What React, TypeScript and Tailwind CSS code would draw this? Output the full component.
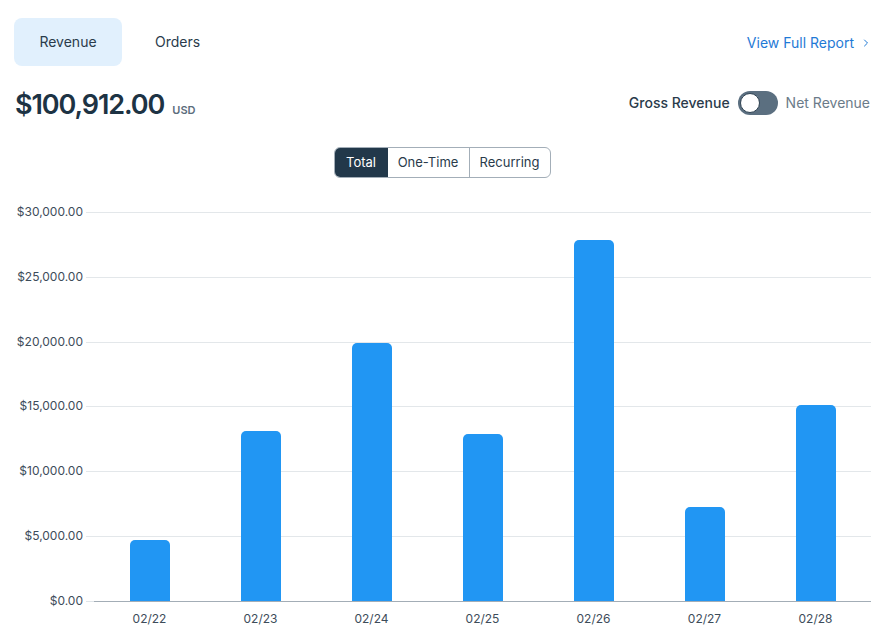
import { ChevronRight } from 'lucide-react'

const ticks = ['$30,000.00', '$25,000.00', '$20,000.00', '$15,000.00', '$10,000.00', '$5,000.00', '$0.00']

const data = [
  { day: '02/22', value: 4707 },
  { day: '02/23', value: 13117 },
  { day: '02/24', value: 19907 },
  { day: '02/25', value: 12886 },
  { day: '02/26', value: 27855 },
  { day: '02/27', value: 7253 },
  { day: '02/28', value: 15123 },
]

const MAX = 30000

export default function App() {
  return (
    <div className="w-[891px] h-[632px] bg-white px-[14px] pt-[18px] font-['Inter',sans-serif] text-[#1f3445] overflow-hidden">
      {/* Tabs + report link */}
      <div className="flex items-center justify-between h-12">
        <div className="flex items-center h-full">
          <button className="h-full w-[108px] rounded-lg bg-[#e1f0fd] text-sm text-[#2a3b4b]">Revenue</button>
          <button className="h-full px-[33px] text-sm text-[#2a3b4b]">Orders</button>
        </div>
        <a className="flex items-center gap-1.5 text-sm text-[#1f7ad6] pr-[5px] mt-[2px]">
          View Full Report
          <ChevronRight size={12} strokeWidth={2} />
        </a>
      </div>

      {/* Amount + toggle */}
      <div className="flex items-center justify-between mt-[24px] h-[30px] pr-[7px]">
        <div className="flex items-baseline gap-2 pl-[1px]">
          <span className="text-[27px] font-semibold tracking-[-0.04em] text-[#1d3344]">$100,912.00</span>
          <span className="text-[11px] font-semibold text-[#5c6d7c]">USD</span>
        </div>
        <div className="flex items-center gap-2 text-sm -mt-[4px]">
          <span className="font-medium text-[#2a3b4b]">Gross Revenue</span>
          <div className="w-10 h-6 rounded-full bg-[#5b6f80] flex items-center px-[2px]">
            <div className="w-5 h-5 rounded-full bg-white border-[1.5px] border-[#2f4252]" />
          </div>
          <span className="text-[#6b7b89]">Net Revenue</span>
        </div>
      </div>

      {/* Segmented control */}
      <div className="flex justify-center mt-[27px] pr-[7px]">
        <div className="flex h-[31px] rounded-md border border-[#a3aeb8] overflow-hidden text-[13px] whitespace-nowrap">
          <button className="bg-[#22384a] text-white w-[53px]">Total</button>
          <button className="border-r border-[#a3aeb8] w-[82px] text-[#2a3b4b]">One-Time</button>
          <button className="w-[80px] text-[#2a3b4b]">Recurring</button>
        </div>
      </div>

      {/* Chart */}
      <div className="flex mt-[34px] mr-[6px]">
        <div className="w-[69px] h-[389px] flex flex-col justify-between items-end text-xs text-[#3d4c5a]">
          {ticks.map((t) => (
            <div key={t} className="h-0 flex items-center">
              {t}
            </div>
          ))}
        </div>
        <div className="flex-1 ml-[3px]">
          <div className="relative h-[389px]">
            <div className="h-full flex flex-col justify-between">
              {ticks.map((t, i) =>
                i === ticks.length - 1 ? (
                  <div key={t} className="h-0 flex">
                    <div className="w-2 border-t border-[#dfe4e8]" />
                    <div className="flex-1 border-t border-[#a3adb6]" />
                  </div>
                ) : (
                  <div key={t} className="h-0 border-t border-[#e3e7ea]" />
                )
              )}
            </div>
            <div className="absolute inset-0 left-2 flex items-end">
              {data.map((d) => (
                <div key={d.day} className="flex-1 h-full flex items-end justify-center">
                  <div
                    className="w-10 rounded-t-[5px] bg-[#2196f3]"
                    style={{ height: `${(d.value / MAX) * 100}%` }}
                  />
                </div>
              ))}
            </div>
          </div>
          <div className="flex pl-2 mt-[10px] text-xs text-[#3d4c5a]">
            {data.map((d) => (
              <div key={d.day} className="flex-1 text-center">
                {d.day}
              </div>
            ))}
          </div>
        </div>
      </div>
    </div>
  )
}
